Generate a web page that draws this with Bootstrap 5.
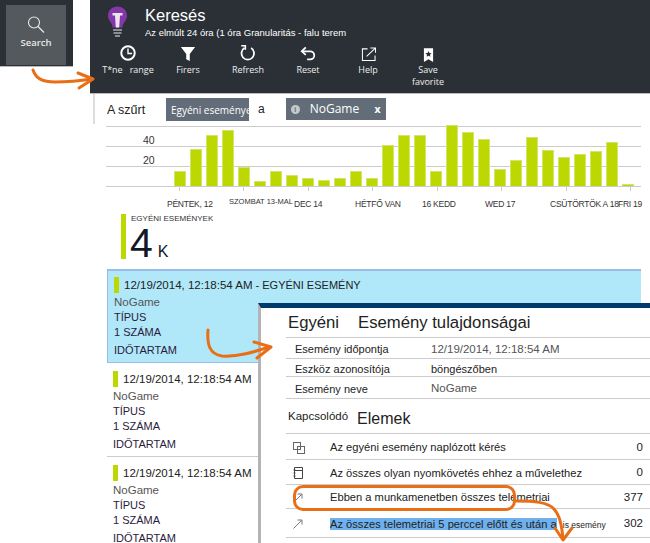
<!DOCTYPE html>
<html lang="hu">
<head>
    <meta charset="UTF-8">
    <title>Keresés</title>
    <meta name="viewport" content="width=device-width, initial-scale=1">
    <link href="https://cdn.jsdelivr.net/npm/bootstrap@5.3.0/dist/css/bootstrap.min.css" rel="stylesheet">
    <style>
        html, body { height: 543px; overflow: hidden; }
        body { position: relative; background: #fff; color: #222; font-family: "Liberation Sans", Arial, sans-serif; font-size: 12px; }
        .side-col { width: 90px; flex: none; }
        .search-box { width: 73px; height: 67px; background: #2a3035; border-bottom: 1px solid #bbb; padding: 5px 6px; }
        .search-tile { width: 60px; height: 60px; background: #54595d; color: #e8e8e8; font: 600 9.5px/12px "Open Sans", sans-serif; padding-top: 11px; }
        .search-tile span { margin-top: 4px; }
        .main-col { width: 560px; flex: none; position: relative; height: 543px; }

        .top-bar { height: 94px; background: #2a3035; border-bottom: 1px solid #bbb; color: #fff; }
        .title-row { height: 37px; padding: 6px 0 0 17px; }
        .bulb { margin-right: 17px; flex: none; }
        .title-big { font-size: 16.500px; line-height: 18px; }
        .title-small { font-size: 9.500px; line-height: 11px; margin-top: 3px; white-space: nowrap; }
        .tool-row { padding-left: 8px; }
        .tool-btn { width: 60px; text-align: center; font: 500 9px/12px "Open Sans", sans-serif; color: #eee; }
        .tool-ico { height: 25px; display: flex; align-items: flex-end; justify-content: center; margin-bottom: 2px; }

        .filter-row { height: 30px; margin-top: 0; margin-left: 3px; padding-left: 12px; border-left: 2px solid #ddd; font-size: 12.500px; }
        .filter-a { width: 59px; padding-top: 3px; }
        .chip { background: #636d79; color: #fff; height: 22px; font: 10.500px/24px "Open Sans", sans-serif; white-space: nowrap; overflow: hidden; }
        .chip-one { width: 83px; padding-left: 5px; height: 23px; font-size: 10px; }
        .chip-two { width: 100px; margin-left: 21px; padding-left: 5px; font-size: 12px; }
        .chip-x { font-weight: 700; margin-left: auto; padding-right: 5px; font-size: 10.500px; }
        .chip-dot { width: 9px; height: 9px; border-radius: 50%; background: #c5c9ce; color: #636d79; margin-right: 10px; font: 700 7px/9px "Liberation Sans", sans-serif; text-align: center; }
        .mid-a { margin-left: 9px; font-size: 12px; }

        .plot { margin: 2px 9px 0 16px; height: 61px; display: flex; align-items: flex-end; position: relative;
            background: repeating-linear-gradient(to bottom, #ccc 0, #ccc 1px, transparent 1px, transparent 20px); border-bottom: 1px solid #ccc; }
        .y-axis { width: 68px; flex: none; align-self: stretch; position: relative; font-size: 10.500px; color: #333; padding-left: 37px; padding-top: 4px; line-height: 20px; }
        .bar-wrap { display: flex; gap: 4px; align-items: flex-end; }
        .bar { width: 12px; background: #bcd800; border: 1px solid #d3e56b; border-bottom: 0; }
        .tick-row { margin-left: 89px; width: 452px; display: flex; justify-content: space-between; height: 4px; }
        .tick { width: 1px; height: 4px; background: #ccc; }
        .axis-labels { display: grid; grid-template-columns: 62px 65px 61px 67px 63px 65px 68px 30px; margin: 7px 0 0 77px; font-size: 8.500px; line-height: 12px; color: #333; white-space: nowrap; letter-spacing: -.25px; }
        .lbl-small { font-size: 7.500px; margin-top: -2px; letter-spacing: 0; }

        .metric { margin: 4px 0 0 31px; height: 45px; border-left: 5px solid #bcd800; padding-left: 4px; }
        .metric-cap { font-size: 8px; line-height: 10px; color: #333; white-space: nowrap; padding-left: 1px; }
        .metric-num { font-size: 41px; line-height: 38px; color: #111827; }
        .metric-unit { font-size: 16px; margin-left: 5px; }

        .evt-list { margin: 10px 9px 0 17px; }
        .evt { padding: 8px 0 0 6px; height: 94px; font-size: 11px; line-height: 15px; color: #2b1a3d; border-bottom: 1px solid #ccc; }
        .evt-on { background: #b0e8f9; border: 0; padding-top: 6px; border-top: 2px solid #9bbcea; border-left: 1px solid #9bbcea; border-bottom: 1px solid #9bbcea; }
        .evt-head { height: 16px; color: #222; font-size: 11.500px; white-space: nowrap; margin-bottom: 2px; line-height: 17px; }
        .evt-mark { width: 5px; height: 16px; background: #bcd800; margin-right: 5px; flex: none; }
        .evt-rest { font-size: 11px; margin-left: 3px; }
        .evt-name { color: #555; font-size: 11.500px; }
        .evt-dur { margin-top: 3px; }

        .detail { position: absolute; left: 168px; top: 303px; right: 0; bottom: 0; background: #fff; border-top: 5px solid #003a6b; border-left: 3px solid #b4b4b4; padding-left: 25px; color: #222; }
        .detail-title { font-size: 16.700px; line-height: 20px; height: 29px; padding: 5px 0 0 2px; }
        .title-gap { margin-left: 19px; }
        .prop { border-top: 1px solid #ccc; display: flex; align-items: center; padding: 3px 0 0 9px; font-size: 11px; }
        .prop-a { height: 21px; }
        .prop-b { height: 18px; }
        .prop-c { height: 23px; border-bottom: 1px solid #ccc; }
        .prop-key { width: 136px; }
        .prop-val { color: #555; font-size: 11.500px; }
        .rel-title { font-size: 16px; line-height: 20px; height: 34px; padding: 10px 0 0 2px; white-space: nowrap; }
        .rel-small { font-size: 11.500px; position: relative; top: -4px; }
        .rel-gap { margin-left: 9px; }
        .rel { border-top: 1px solid #ccc; display: flex; align-items: center; font-size: 11.150px; padding-top: 2px; white-space: nowrap; }
        .rel-ico { width: 44px; padding-left: 7px; flex: none; display: flex; }
        .rel-num { margin-left: auto; padding-right: 7px; font-size: 11.500px; }
        .rel-1 { height: 26px; }
        .rel-2 { height: 25px; }
        .rel-3 { height: 24px; }
        .rel-4 { height: 30px; border-bottom: 1px solid #ccc; }
        .sel-text { background: #6eb1ee; }
        .tiny-text { font-size: 8.500px; margin-left: 3px; }

        .ring { position: absolute; left: 293px; top: 485px; width: 223px; height: 26px; border: 3px solid #e96f16; border-radius: 10px; }
        .arrow-layer { position: absolute; left: 0; top: 0; pointer-events: none; }
    </style>
</head>
<body>

<div class="d-flex">
    <!-- small search tile -->
    <div class="side-col">
        <div class="search-box">
            <div class="search-tile d-flex flex-column align-items-center">
                <svg width="18" height="17" viewBox="0 0 18 17" fill="none" stroke="#e8e8e8"><circle cx="7" cy="6.500" r="5.500" stroke-width="1.100"/><path d="M11 10.500l6 6" stroke-width="1.300"/></svg>
                <span>Search</span>
            </div>
        </div>
    </div>

    <div class="main-col">
        <!-- header -->
        <div class="top-bar">
            <div class="title-row d-flex">
                <svg class="bulb" width="21" height="31" viewBox="0 0 21 31">
                    <path d="M10.500 .5C5 .5 1 4.500 1 9.500c0 4 2.500 6 4 9 .5 1 .5 2 .5 3h10c0-1 0-2 .5-3 1.500-3 4-5 4-9 0-5-4-9-9.500-9z" fill="#8438a8"/>
                    <path d="M5.500 7h10v2.500h-2.500l-.8 12h-3.400l-.8-12H5.500z" fill="#efe2f3"/>
                    <path d="M6 23h9v2H6zM6.500 26h8v2h-8zM8 29h5v2H8z" fill="#8b8d90"/>
                </svg>
                <div>
                    <div class="title-big">Keresés</div>
                    <div class="title-small">Az elmúlt 24 óra (1 óra Granularitás - falu terem</div>
                </div>
            </div>
            <div class="tool-row d-flex">
                <div class="tool-btn">
                    <div class="tool-ico"><svg width="18" height="18" viewBox="0 0 20 20" fill="none" stroke="#fff"><circle cx="10" cy="10" r="7.500" stroke-width="2.200"/><path d="M10 5v5.500h4.500" stroke-width="1.500"/></svg></div>
                    <div>T*ne &nbsp; range</div>
                </div>
                <div class="tool-btn">
                    <div class="tool-ico"><svg width="16" height="16" viewBox="0 0 18 18" fill="#fff"><path d="M1 1h16l-6 8v8l-4-2V9z"/></svg></div>
                    <div>Firers</div>
                </div>
                <div class="tool-btn">
                    <div class="tool-ico"><svg width="18" height="18" viewBox="0 0 20 20" fill="none" stroke="#fff" stroke-width="2"><path d="M6 4.500a7 7 0 1 0 7.500 0"/><path d="M2.500 2h4.500v4.500" stroke-width="1.800"/></svg></div>
                    <div>Refresh</div>
                </div>
                <div class="tool-btn">
                    <div class="tool-ico"><svg width="16" height="16" viewBox="0 0 18 18" fill="none" stroke="#fff" stroke-width="2"><path d="M3 6h8a4.500 4.500 0 0 1 1 9H8"/><path d="M6.500 1.500L2 6l4.500 4"/></svg></div>
                    <div>Reset</div>
                </div>
                <div class="tool-btn">
                    <div class="tool-ico"><svg width="15" height="15" viewBox="0 0 16 16" fill="none" stroke="#fff" stroke-width="1.100"><path d="M7 2H1.500v12.500H15V9"/><path d="M6 10L15 1.500M10 1h5.500v5" /></svg></div>
                    <div>Help</div>
                </div>
                <div class="tool-btn">
                    <div class="tool-ico"><svg width="11" height="14" viewBox="0 0 12 15"><path d="M1 0h10v15l-5-3-5 3z" fill="#fff"/><path d="M6 3l1 2.300 2.400.2-1.800 1.600.5 2.400L6 8.300 3.900 9.500l.5-2.400L2.600 5.500 5 5.300z" fill="#2a3035"/></svg></div>
                    <div>Save<br>favorite</div>
                </div>
            </div>
        </div>

        <!-- filter -->
        <div class="filter-row d-flex align-items-center">
            <span class="filter-a">A szűrt</span>
            <span class="chip chip-one">Egyéni eseményel</span>
            <span class="mid-a">a</span>
            <span class="chip chip-two d-flex align-items-center">
                <span class="chip-dot">i</span>NoGame<span class="chip-x">x</span>
            </span>
        </div>

        <!-- chart -->
        <div class="plot">
            <div class="y-axis">40<br>20</div>
            <div class="bar-wrap" id="bars"></div>
        </div>
        <div class="tick-row">
            <span class="tick"></span><span class="tick"></span><span class="tick"></span><span class="tick"></span>
            <span class="tick"></span><span class="tick"></span><span class="tick"></span><span class="tick"></span>
        </div>
        <div class="axis-labels">
            <span>PÉNTEK, 12</span>
            <span class="lbl-small">SZOMBAT 13-MAL</span>
            <span>DEC 14</span>
            <span>HÉTFŐ VAN</span>
            <span>16 KEDD</span>
            <span>WED 17</span>
            <span>CSÜTÖRTÖK A 18</span>
            <span>FRI 19</span>
        </div>

        <!-- total -->
        <div class="metric">
            <div class="metric-cap">EGYÉNI ESEMÉNYEK</div>
            <div class="metric-num">4<span class="metric-unit">K</span></div>
        </div>

        <!-- events -->
        <div class="evt-list">
            <div class="evt evt-on">
                <div class="evt-head d-flex"><span class="evt-mark"></span>12/19/2014, 12:18:54 AM<span class="evt-rest">- EGYÉNI ESEMÉNY</span></div>
                <div class="evt-name">NoGame</div>
                <div>TÍPUS</div>
                <div>1 SZÁMA</div>
                <div class="evt-dur">IDŐTARTAM</div>
            </div>
            <div class="evt">
                <div class="evt-head d-flex"><span class="evt-mark"></span>12/19/2014, 12:18:54 AM</div>
                <div class="evt-name">NoGame</div>
                <div>TÍPUS</div>
                <div>1 SZÁMA</div>
                <div class="evt-dur">IDŐTARTAM</div>
            </div>
            <div class="evt">
                <div class="evt-head d-flex"><span class="evt-mark"></span>12/19/2014, 12:18:54 AM</div>
                <div class="evt-name">NoGame</div>
                <div>TÍPUS</div>
                <div>1 SZÁMA</div>
                <div class="evt-dur">IDŐTARTAM</div>
            </div>
        </div>

        <!-- detail blade -->
        <div class="detail">
            <div class="detail-title">Egyéni<span class="title-gap">Esemény tulajdonságai</span></div>
            <div class="prop prop-a"><span class="prop-key">Esemény időpontja</span><span class="prop-val">12/19/2014, 12:18:54 AM</span></div>
            <div class="prop prop-b"><span class="prop-key">Eszköz azonosítója</span><span>böngészőben</span></div>
            <div class="prop prop-c"><span class="prop-key">Esemény neve</span><span class="prop-val">NoGame</span></div>
            <div class="rel-title"><span class="rel-small">Kapcsolódó</span><span class="rel-gap">Elemek</span></div>
            <div class="rel rel-1">
                <span class="rel-ico"><svg width="12" height="12" viewBox="0 0 12 12" fill="none" stroke="#666"><rect x=".5" y=".5" width="7" height="7"/><rect x="4.500" y="4.500" width="7" height="7"/></svg></span>
                Az egyéni esemény naplózott kérés<span class="rel-num">0</span>
            </div>
            <div class="rel rel-2">
                <span class="rel-ico"><svg width="10" height="12" viewBox="0 0 10 12" fill="none" stroke="#444"><path d="M1.500.5h8v11h-8zM.5 3h2M.5 6h2M.5 9h2M1.500 3.500h8"/></svg></span>
                Az összes olyan nyomkövetés ehhez a művelethez<span class="rel-num">0</span>
            </div>
            <div class="rel rel-3">
                <span class="rel-ico"><svg width="10" height="10" viewBox="0 0 10 10" fill="none" stroke="#777"><path d="M.5 9.500l8-8M4.500 1h4.500v4.500"/></svg></span>
                Ebben a munkamenetben összes telemetriai<span class="rel-num">377</span>
            </div>
            <div class="rel rel-4">
                <span class="rel-ico"><svg width="10" height="10" viewBox="0 0 10 10" fill="none" stroke="#777"><path d="M.5 9.500l8-8M4.500 1h4.500v4.500"/></svg></span>
                <span><span class="sel-text">Az összes telemetriai 5 perccel előtt és után a</span> <span class="tiny-text">is esemény</span></span><span class="rel-num">302</span>
            </div>
        </div>
    </div>
</div>

<!-- orange callouts -->
<div class="ring"></div>
<svg class="arrow-layer" width="650" height="543" viewBox="0 0 650 543" fill="none" stroke="#e96f16" stroke-linecap="round" stroke-linejoin="round">
    <path d="M33 70c3 9 10 12 22 12 12 0 24-1 37-3" stroke-width="3"/>
    <path d="M78 73l15 6-14 9" stroke-width="3"/>
    <path d="M208 330c-1 14 1 24 14 26 16 1 32-4 47-9" stroke-width="3"/>
    <path d="M254 342l17 5-14 11" stroke-width="3"/>
    <path d="M516 501c18 0 32 1 38 8 7 8 8 20 9 30" stroke-width="3"/>
    <path d="M555 528l8 12 9-12" stroke-width="3"/>
</svg>

<script src="https://cdn.jsdelivr.net/npm/bootstrap@5.3.0/dist/js/bootstrap.bundle.min.js"></script>
<script>
    const barHeights = [15,37,51,56,19,5,15,11,8,6,8,15,8,41,51,51,15,61,54,47,17,26,49,36,29,32,35,44,2];
    let barsDiv = document.getElementById("bars");
    barHeights.forEach(h => {
        barsDiv.innerHTML += `<div class="bar" style="height:${h}px"></div>`;
    });
</script>
</body>
</html>
